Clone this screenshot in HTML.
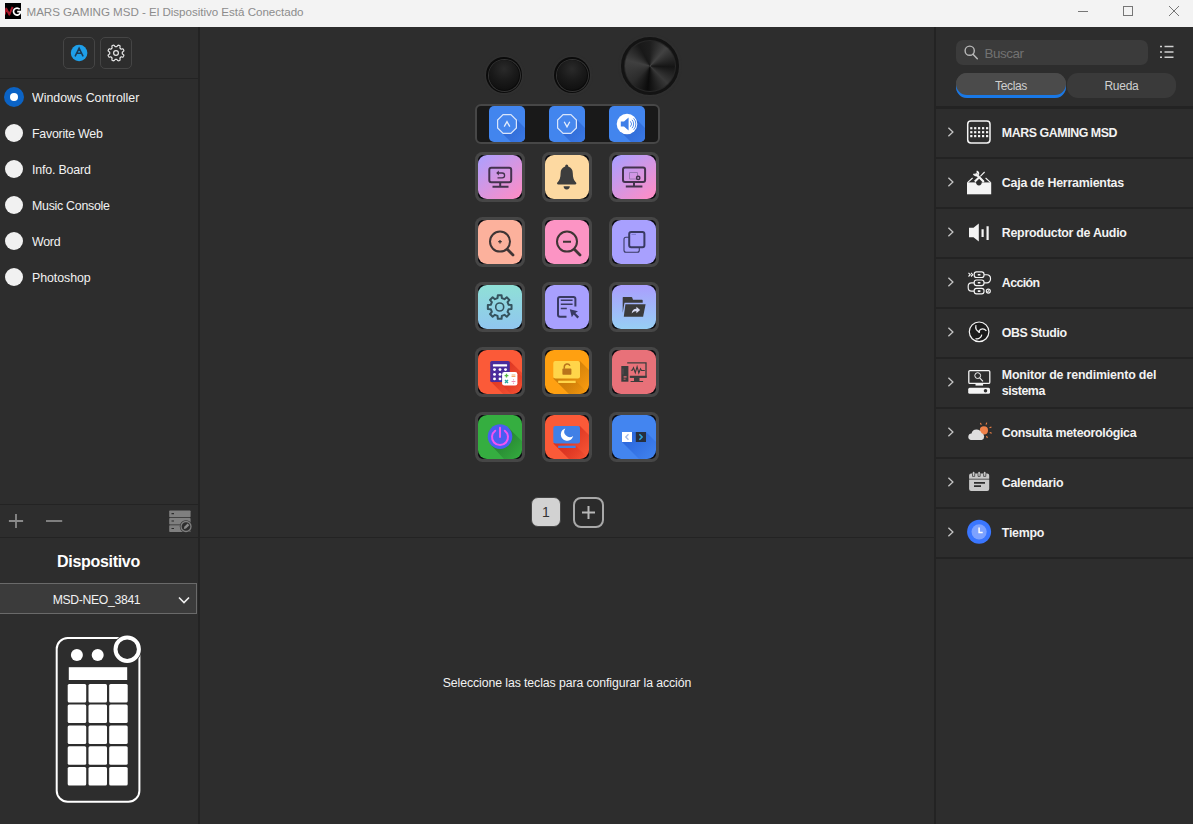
<!DOCTYPE html>
<html lang="es">
<head>
<meta charset="utf-8">
<title>MARS GAMING MSD</title>
<style>
*{box-sizing:border-box;margin:0;padding:0}
html,body{width:1193px;height:824px;overflow:hidden;background:#2d2d2d;font-family:"Liberation Sans",sans-serif;color:#f0f0f0}
.abs{position:absolute}
#title,.plabel,.txt,#disp,#msd,#sel,#buscar,#teclas,#rueda{opacity:.999}
#disp,#msd,#sel,#buscar,#teclas,#rueda{display:inline-block}
#app{position:relative;width:1193px;height:824px;background:#2d2d2d;overflow:hidden}
#titlebar{position:absolute;left:0;top:0;width:1193px;height:27px;background:#f3f3f3}
#title{position:absolute;left:26.500px;top:5px;font-size:11.600px;line-height:14px;color:#8c8c8c;white-space:nowrap}
.vline{position:absolute;background:#232323}
.hline{position:absolute;background:#232323}
.tbtn{position:absolute;width:32px;height:32px;border:1px solid #454545;border-radius:5px;top:37px}
.radio{position:absolute;left:4.700px;width:18.400px;height:18.400px;border-radius:50%;background:#f1f1f1;margin-top:-0.200px}
.radio.sel{background:#0b63c5;left:3.800px;width:20.400px;height:20.400px;margin-top:-1.100px}
.radio.sel::after{content:"";position:absolute;left:6px;top:6px;width:8.400px;height:8.400px;border-radius:50%;background:#fff}
.plabel{position:absolute;left:32px;font-size:12.400px;line-height:16px;color:#f2f2f2;white-space:nowrap}
.key{position:absolute;width:50px;height:50px;border-radius:7.500px;background:#464646;}
.key>.in{position:absolute;left:3px;top:3px;width:44px;height:44px;border-radius:5px;background:#0d0d12;overflow:hidden}
.lcd{position:absolute;top:106px;width:36px;height:36px;border-radius:5px;background:#4285ee;overflow:hidden}
.lcd svg{position:absolute;left:0;top:0;width:36px;height:36px}
.key svg{position:absolute;left:0;top:0;width:44px;height:44px}
.row{position:absolute;left:937px;width:256px;height:48px}
.row .chev{position:absolute;left:9.800px;top:17.700px}
.row .txt{position:absolute;left:64.800px;font-size:12.400px;font-weight:bold;color:#f2f2f2;white-space:nowrap;line-height:16px}
#title{letter-spacing:-0.029px}
#l1{letter-spacing:-0.007px}
#l2{letter-spacing:-0.231px}
#l3{letter-spacing:-0.184px}
#l4{letter-spacing:-0.282px}
#l5{letter-spacing:-0.248px}
#l6{letter-spacing:-0.072px}
#r1{letter-spacing:-0.436px}
#r2{letter-spacing:-0.232px}
#r3{letter-spacing:-0.276px}
#r4{letter-spacing:-0.619px}
#r5{letter-spacing:-0.404px}
#r6{letter-spacing:-0.178px}
#r6b{letter-spacing:-0.437px}
#r7{letter-spacing:-0.302px}
#r8{letter-spacing:-0.265px}
#r9{letter-spacing:-0.241px}
#sel{letter-spacing:-0.094px}
#disp{letter-spacing:-0.312px}
#msd{letter-spacing:-0.321px}
#buscar{letter-spacing:-0.465px}
#teclas{letter-spacing:-0.336px}
#rueda{letter-spacing:-0.255px}

</style>
</head>
<body>
<div id="app">
<!-- title bar -->
<div id="titlebar">
  <svg class="abs" style="left:5px;top:3px" width="16" height="16" viewBox="0 0 16 16"><rect width="16" height="16" fill="#000"/><path d="M-.3 11.500L1.300 5.600 4.300 11.600 7.600 3.800" stroke="#a8182a" stroke-width="2" fill="none" stroke-linejoin="round"/><path d="M14.700 6.300A3.500 3.500 0 1 0 15.300 9.800L15.300 8.700 12.200 8.700" stroke="#fff" stroke-width="1.700" fill="none"/></svg>
  <div id="title">MARS GAMING MSD - El Dispositivo Está Conectado</div>
  <svg class="abs" style="left:1077px;top:6px" width="12" height="12" viewBox="0 0 12 12"><path d="M1 5.5H11" stroke="#767676" stroke-width="1"/></svg>
  <svg class="abs" style="left:1122px;top:5px" width="12" height="12" viewBox="0 0 12 12"><rect x="1.5" y="1.5" width="9" height="9" stroke="#767676" stroke-width="1" fill="none"/></svg>
  <svg class="abs" style="left:1168px;top:5px" width="12" height="12" viewBox="0 0 12 12"><path d="M1 1L11 11M11 1L1 11" stroke="#767676" stroke-width="1"/></svg>
</div>

<!-- structural lines -->
<div class="vline" style="left:198px;top:27px;width:2px;height:797px"></div>
<div class="vline" style="left:934px;top:27px;width:2px;height:797px"></div>
<div class="hline" style="left:0;top:78px;width:198px;height:1px"></div>
<div class="hline" style="left:0;top:504px;width:198px;height:1px"></div>
<div class="hline" style="left:0;top:537px;width:935px;height:1px"></div>

<!-- LEFT PANEL -->
<div id="left">
  <div class="tbtn" style="left:63px"><svg class="abs" style="left:-1px;top:-1px" width="32" height="32" viewBox="0 0 32 32"><circle cx="16.100" cy="16" r="8.300" fill="#1e9fe9"/><path d="M12.300 18.900L16.100 11.300L19.900 18.900M13.500 16.300h5.200" fill="none" stroke="#1c3a55" stroke-width="1.500" stroke-linecap="round"/></svg></div>
  <div class="tbtn" style="left:100px"><svg class="abs" style="left:-1px;top:-1px" width="32" height="32" viewBox="0 0 32 32"><path d="M23.58 19.14L23.45 19.43L23.31 19.72L23.15 20.01L22.63 20.06L22.03 20.03L21.44 19.95L20.95 19.90L20.79 20.09L20.63 20.28L20.45 20.45L20.28 20.63L20.09 20.79L19.90 20.95L19.95 21.44L20.03 22.03L20.06 22.63L20.01 23.15L19.72 23.31L19.43 23.45L19.14 23.58L18.84 23.69L18.53 23.80L18.23 23.89L17.82 23.56L17.41 23.11L17.05 22.64L16.74 22.26L16.49 22.28L16.25 22.30L16.00 22.30L15.75 22.30L15.51 22.28L15.26 22.26L14.95 22.64L14.59 23.11L14.18 23.56L13.77 23.89L13.47 23.80L13.16 23.69L12.86 23.58L12.57 23.45L12.28 23.31L11.99 23.15L11.94 22.63L11.97 22.03L12.05 21.44L12.10 20.95L11.91 20.79L11.72 20.63L11.55 20.45L11.37 20.28L11.21 20.09L11.05 19.90L10.56 19.95L9.97 20.03L9.37 20.06L8.85 20.01L8.69 19.72L8.55 19.43L8.42 19.14L8.31 18.84L8.20 18.53L8.11 18.23L8.44 17.82L8.89 17.41L9.36 17.05L9.74 16.74L9.72 16.49L9.70 16.25L9.70 16.00L9.70 15.75L9.72 15.51L9.74 15.26L9.36 14.95L8.89 14.59L8.44 14.18L8.11 13.77L8.20 13.47L8.31 13.16L8.42 12.86L8.55 12.57L8.69 12.28L8.85 11.99L9.37 11.94L9.97 11.97L10.56 12.05L11.05 12.10L11.21 11.91L11.37 11.72L11.55 11.55L11.72 11.37L11.91 11.21L12.10 11.05L12.05 10.56L11.97 9.97L11.94 9.37L11.99 8.85L12.28 8.69L12.57 8.55L12.86 8.42L13.16 8.31L13.47 8.20L13.77 8.11L14.18 8.44L14.59 8.89L14.95 9.36L15.26 9.74L15.51 9.72L15.75 9.70L16.00 9.70L16.25 9.70L16.49 9.72L16.74 9.74L17.05 9.36L17.41 8.89L17.82 8.44L18.23 8.11L18.53 8.20L18.84 8.31L19.14 8.42L19.43 8.55L19.72 8.69L20.01 8.85L20.06 9.37L20.03 9.97L19.95 10.56L19.90 11.05L20.09 11.21L20.28 11.37L20.45 11.55L20.63 11.72L20.79 11.91L20.95 12.10L21.44 12.05L22.03 11.97L22.63 11.94L23.15 11.99L23.31 12.28L23.45 12.57L23.58 12.86L23.69 13.16L23.80 13.47L23.89 13.77L23.56 14.18L23.11 14.59L22.64 14.95L22.26 15.26L22.28 15.51L22.30 15.75L22.30 16.00L22.30 16.25L22.28 16.49L22.26 16.74L22.64 17.05L23.11 17.41L23.56 17.82L23.89 18.23L23.80 18.53L23.69 18.84Z" fill="none" stroke="#e6e6e6" stroke-width="1.200" stroke-linejoin="round"/><circle cx="16" cy="16" r="2.400" fill="none" stroke="#e6e6e6" stroke-width="1.200"/></svg></div>

  <div class="radio sel" style="top:88px"></div><div class="plabel" id="l1" style="top:90px">Windows Controller</div>
  <div class="radio" style="top:124px"></div><div class="plabel" id="l2" style="top:126px">Favorite Web</div>
  <div class="radio" style="top:160px"></div><div class="plabel" id="l3" style="top:162px">Info. Board</div>
  <div class="radio" style="top:196px"></div><div class="plabel" id="l4" style="top:198px">Music Console</div>
  <div class="radio" style="top:232px"></div><div class="plabel" id="l5" style="top:234px">Word</div>
  <div class="radio" style="top:268px"></div><div class="plabel" id="l6" style="top:270px">Photoshop</div>

  <svg class="abs" style="left:8px;top:513px" width="16" height="16" viewBox="0 0 16 16"><path d="M8 .9v14.200M.9 8h14.200" stroke="#8a8a8a" stroke-width="1.800"/></svg>
  <svg class="abs" style="left:45px;top:513px" width="18" height="16" viewBox="0 0 18 16"><path d="M1 8h16.200" stroke="#8a8a8a" stroke-width="1.800"/></svg>
  <svg class="abs" style="left:168px;top:509px" width="25" height="25" viewBox="0 0 25 25"><g fill="#7f7f7f"><rect x="1.200" y="1.500" width="21.400" height="6.700" rx=".8"/><rect x="1.200" y="8.900" width="21.400" height="6.700" rx=".8"/><rect x="1.200" y="16.300" width="21.400" height="6.700" rx=".8"/></g><g stroke="#2d2d2d" stroke-width="1.200"><path d="M3.500 4.700h2.500M3.500 12h2.500M3.500 19.500h2.500"/></g><circle cx="18" cy="17.500" r="6.200" fill="#2d2d2d"/><circle cx="18" cy="17.500" r="5" fill="none" stroke="#7f7f7f" stroke-width="1.300"/><path d="M15.800 20l.5-2.200 3.300-3.300 1.700 1.700-3.300 3.300z" fill="#8a8a8a"/></svg>

  <div class="abs" style="left:0;top:552.300px;width:197px;text-align:center;font-size:16px;font-weight:bold;line-height:20px;color:#fff"><span id="disp">Dispositivo</span></div>
  <div class="abs" style="left:0;top:583.400px;width:197px;height:31px;background:#3b3b3b;border:1px solid #6a6a6a;border-left:none"></div>
  <div class="abs" style="left:0;top:592px;width:193px;text-align:center;font-size:12.200px;line-height:16px;color:#f2f2f2"><span id="msd">MSD-NEO_3841</span></div>
  <svg class="abs" style="left:177px;top:593px" width="14" height="14" viewBox="0 0 14 14"><path d="M2 4.500l5 5 5-5" fill="none" stroke="#f0f0f0" stroke-width="1.600"/></svg>

  <svg class="abs" style="left:50px;top:630px" width="100" height="180" viewBox="0 0 100 180"><rect x="6.700" y="8" width="82.700" height="163.800" rx="11" fill="none" stroke="#fff" stroke-width="2"/><circle cx="77.200" cy="19.200" r="14.500" fill="#2d2d2d"/><circle cx="77.200" cy="19.200" r="11.700" fill="none" stroke="#fff" stroke-width="4"/><g fill="#fff"><circle cx="26.900" cy="25" r="6"/><circle cx="47.700" cy="25" r="6"/><rect x="18.800" y="37.200" width="58.400" height="12.800"/><rect x="17.7" y="53.9" width="18.500" height="18.500" rx="1.500"/><rect x="17.7" y="74.6" width="18.500" height="18.500" rx="1.500"/><rect x="17.7" y="95.4" width="18.500" height="18.500" rx="1.500"/><rect x="17.7" y="116.2" width="18.500" height="18.500" rx="1.500"/><rect x="17.7" y="137" width="18.500" height="18.500" rx="1.500"/><rect x="38.5" y="53.9" width="18.500" height="18.500" rx="1.500"/><rect x="38.5" y="74.6" width="18.500" height="18.500" rx="1.500"/><rect x="38.5" y="95.4" width="18.500" height="18.500" rx="1.500"/><rect x="38.5" y="116.2" width="18.500" height="18.500" rx="1.500"/><rect x="38.5" y="137" width="18.500" height="18.500" rx="1.500"/><rect x="59.2" y="53.9" width="18.500" height="18.500" rx="1.500"/><rect x="59.2" y="74.6" width="18.500" height="18.500" rx="1.500"/><rect x="59.2" y="95.4" width="18.500" height="18.500" rx="1.500"/><rect x="59.2" y="116.2" width="18.500" height="18.500" rx="1.500"/><rect x="59.2" y="137" width="18.500" height="18.500" rx="1.500"/></g></svg>
</div>
<!-- CENTER -->
<div id="center">
  <!-- knobs -->
  <div class="abs" style="left:486.4px;top:57.3px;width:36px;height:36px;border-radius:50%;background:#0b0b0b;box-shadow:0 0 2px 1px rgba(52,52,52,.8)"><div class="abs" style="left:1.300px;top:1.300px;width:33.400px;height:33.400px;border-radius:50%;background:#343434"></div><div class="abs" style="left:2.300px;top:2.300px;width:31.400px;height:31.400px;border-radius:50%;background:#0a0a0a"></div><div class="abs" style="left:3px;top:3px;width:30px;height:30px;border-radius:50%;background:radial-gradient(circle at 50% 30%,#2a2a2a 0%,#1a1a1a 45%,#0b0b0b 100%)"></div></div>
  <div class="abs" style="left:554.4px;top:57.3px;width:36px;height:36px;border-radius:50%;background:#0b0b0b;box-shadow:0 0 2px 1px rgba(52,52,52,.8)"><div class="abs" style="left:1.300px;top:1.300px;width:33.400px;height:33.400px;border-radius:50%;background:#343434"></div><div class="abs" style="left:2.300px;top:2.300px;width:31.400px;height:31.400px;border-radius:50%;background:#0a0a0a"></div><div class="abs" style="left:3px;top:3px;width:30px;height:30px;border-radius:50%;background:radial-gradient(circle at 50% 30%,#2a2a2a 0%,#1a1a1a 45%,#0b0b0b 100%)"></div></div>
  <div class="abs" style="left:621.200px;top:37.300px;width:57.600px;height:57.600px;border-radius:50%;background:#131313;box-shadow:0 0 2px 1px rgba(50,50,50,.7)"><div class="abs" style="left:3px;top:3px;width:51.600px;height:51.600px;border-radius:50%;background:#262626"></div><div class="abs" style="left:3.900px;top:3.900px;width:49.800px;height:49.800px;border-radius:50%;background:conic-gradient(from 0deg,#1e1e1e 0deg,#424242 42deg,#151515 92deg,#383838 135deg,#0b0b0b 186deg,#2c2c2c 228deg,#404040 284deg,#181818 332deg,#1e1e1e 360deg)"></div></div>

  <!-- LCD strip -->
  <div class="abs" style="left:475px;top:104px;width:185px;height:40px;border-radius:6px;background:#191919;border:2px solid #474747"></div>
  <div class="lcd" style="left:489px"><svg viewBox="0 0 36 36"><defs><linearGradient id="ls1" x1="0.3" y1="0.3" x2="1" y2="1"><stop offset="0" stop-color="#2f6ad6"/><stop offset="1" stop-color="#3d7de8"/></linearGradient></defs><path d="M10.9 25.100L25.100 10.900 40 26 40 40 26 40z" fill="url(#ls1)"/><path d="M14.1 8.600h7.800L27.400 14.100v7.800L21.900 27.400h-7.800L8.600 21.900v-7.800z" fill="#4687ee" stroke="#d9e5fb" stroke-width="1.250"/><path d="M15.200 20.600L18 15.600 20.800 20.600" fill="none" stroke="#e3ecfc" stroke-width="1.300"/></svg></div>
  <div class="lcd" style="left:549px"><svg viewBox="0 0 36 36"><defs><linearGradient id="ls2" x1="0.3" y1="0.3" x2="1" y2="1"><stop offset="0" stop-color="#2f6ad6"/><stop offset="1" stop-color="#3d7de8"/></linearGradient></defs><path d="M10.9 25.100L25.100 10.900 40 26 40 40 26 40z" fill="url(#ls2)"/><path d="M14.1 8.600h7.800L27.400 14.100v7.800L21.900 27.400h-7.800L8.600 21.900v-7.800z" fill="#4687ee" stroke="#d9e5fb" stroke-width="1.250"/><path d="M15.200 15.700L18 20.900 20.800 15.700" fill="none" stroke="#e3ecfc" stroke-width="1.300"/></svg></div>
  <div class="lcd" style="left:609px"><svg viewBox="0 0 36 36"><defs><linearGradient id="ls3" x1="0.3" y1="0.3" x2="1" y2="1"><stop offset="0" stop-color="#2f6ad6"/><stop offset="1" stop-color="#3d7de8"/></linearGradient></defs><path d="M10.900 25.100L25.100 10.900 40 26 40 40 26 40z" fill="url(#ls3)"/><circle cx="18" cy="18" r="10.300" fill="#fff"/><path d="M11.800 15.400h3.200l4.600-4v13.200l-4.600-4h-3.200z" fill="#3f7fe8"/><path d="M21.400 15.300a4 4 0 0 1 0 5.400M23 13.800a6.200 6.200 0 0 1 0 8.400M24.600 12.300a8.300 8.300 0 0 1 0 11.400" fill="none" stroke="#3f7fe8" stroke-width=".9"/></svg></div>

  <!-- keys grid -->
  <div class="key" style="left:475px;top:152px"><div class="in"><svg viewBox="0 0 44 44"><defs><linearGradient id="g1" x1="0.1" y1="0" x2="0.9" y2="1"><stop offset="0" stop-color="#ae9ffd"/><stop offset="1" stop-color="#fd8dc6"/></linearGradient></defs><rect width="44" height="44" rx="9" fill="url(#g1)"/><rect x="11.3" y="12.8" width="21.9" height="14.4" rx="2" fill="none" stroke="#43324d" stroke-width="2"/><path d="M22.2 27.5v4M14.5 31.7h16" stroke="#43324d" stroke-width="2" fill="none"/><path d="M19 18h5.2a2.4 2.4 0 0 1 0 4.8H19.5" stroke="#43324d" stroke-width="1.3" fill="none"/><path d="M20.8 15.6L18.2 18l2.6 2.4z" fill="#43324d"/></svg></div></div>
  <div class="key" style="left:542px;top:152px"><div class="in"><svg viewBox="0 0 44 44"><rect width="44" height="44" rx="9" fill="#fdd9a1"/><path d="M21.7 9.6a1.5 1.5 0 0 1 1.5 1.5v.5c3 .8 4.6 3.4 4.6 6.6 0 4.6 1 7.2 3.2 9.2.7.7.4 2.1-.9 2.1H13.3c-1.3 0-1.6-1.4-.9-2.1 2.2-2 3.2-4.6 3.2-9.2 0-3.200 1.600-5.800 4.600-6.600v-.5a1.500 1.500 0 0 1 1.500-1.500z" fill="#3d3d3d"/><path d="M18.600 31.300h6.200a3.100 3.100 0 0 1-6.200 0z" fill="#3d3d3d"/></svg></div></div>
  <div class="key" style="left:609px;top:152px"><div class="in"><svg viewBox="0 0 44 44"><defs><linearGradient id="g3" x1="0.1" y1="0" x2="0.9" y2="1"><stop offset="0" stop-color="#aa9fff"/><stop offset="1" stop-color="#ff8dc6"/></linearGradient></defs><rect width="44" height="44" rx="9" fill="url(#g3)"/><rect x="11" y="12.600" width="22.100" height="14.400" rx="2" fill="none" stroke="#43324d" stroke-width="2"/><path d="M22 27.300v4M13.800 31.500h16.600" stroke="#43324d" stroke-width="2" fill="none"/><path d="M17.500 17.500h8v6.500h-8z" stroke="#9a7ab4" stroke-width="1" fill="none"/><circle cx="26.200" cy="22.900" r="2.400" fill="#43324d"/><circle cx="26.200" cy="22.900" r="0.900" fill="#c99ad8"/></svg></div></div>
  <div class="key" style="left:475px;top:217px"><div class="in"><svg viewBox="0 0 44 44"><rect width="44" height="44" rx="9" fill="#fcb19c"/><circle cx="22" cy="21.600" r="10" fill="none" stroke="#3f3535" stroke-width="2"/><path d="M29.300 29.300L35 35" stroke="#3f3535" stroke-width="2.800" stroke-linecap="round"/><path d="M20.200 21.700h3.600M22 19.900v3.600" stroke="#3f3535" stroke-width="1.300"/></svg></div></div>
  <div class="key" style="left:542px;top:217px"><div class="in"><svg viewBox="0 0 44 44"><rect width="44" height="44" rx="9" fill="#fc94c4"/><circle cx="22" cy="21.600" r="10" fill="none" stroke="#3f3535" stroke-width="2"/><path d="M29.300 29.300L35 35" stroke="#3f3535" stroke-width="2.800" stroke-linecap="round"/><path d="M18 21.700h8" stroke="#3f3535" stroke-width="2"/></svg></div></div>
  <div class="key" style="left:609px;top:217px"><div class="in"><svg viewBox="0 0 44 44"><rect width="44" height="44" rx="9" fill="#a8a0fe"/><rect x="12" y="17.200" width="15.300" height="15" rx="2" fill="none" stroke="#393a62" stroke-width="1.100"/><rect x="17.200" y="12.100" width="15.200" height="15.200" rx="2" fill="#a8a0fe" stroke="#393a62" stroke-width="2"/><path d="M19.500 14.400h4.500" stroke="#7d78d0" stroke-width="1"/></svg></div></div>
  <div class="key" style="left:475px;top:282px"><div class="in"><svg viewBox="0 0 44 44"><defs><linearGradient id="g7" x1="0" y1="0" x2="0" y2="1"><stop offset="0" stop-color="#8fe0d6"/><stop offset="1" stop-color="#90c6f0"/></linearGradient></defs><rect width="44" height="44" rx="9" fill="url(#g7)"/><path d="M33.55 20.12L33.55 23.88L30.65 24.15L29.54 26.81L31.41 29.05L28.75 31.71L26.51 29.84L23.85 30.95L23.58 33.85L19.82 33.85L19.55 30.95L16.89 29.84L14.65 31.71L11.99 29.05L13.86 26.81L12.75 24.15L9.85 23.88L9.85 20.12L12.75 19.85L13.86 17.19L11.99 14.95L14.65 12.29L16.89 14.16L19.55 13.05L19.82 10.15L23.58 10.15L23.85 13.05L26.51 14.16L28.75 12.29L31.41 14.95L29.54 17.19L30.65 19.85Z" fill="none" stroke="#35535e" stroke-width="2" stroke-linejoin="round"/><circle cx="21.700" cy="22" r="4" fill="none" stroke="#35535e" stroke-width="1.600"/></svg></div></div>
  <div class="key" style="left:542px;top:282px"><div class="in"><svg viewBox="0 0 44 44"><rect width="44" height="44" rx="9" fill="#a8a0fe"/><path d="M30.400 21.500V14a2 2 0 0 0-2-2H15a2 2 0 0 0-2 2v15.700a2 2 0 0 0 2 2h6.500" fill="none" stroke="#393a62" stroke-width="2"/><path d="M15.800 15.300h11.800M15.800 19.300h11.800M15.800 23.500h6" stroke="#393a62" stroke-width="1.500"/><path d="M24.800 24.200l2 8 1.900-2.600 3.700 3.900 1.700-1.700-3.800-3.700 2.700-1.800z" fill="#393a62"/></svg></div></div>
  <div class="key" style="left:609px;top:282px"><div class="in"><svg viewBox="0 0 44 44"><defs><linearGradient id="g9" x1="0" y1="0" x2="0" y2="1"><stop offset="0" stop-color="#aa9efe"/><stop offset="1" stop-color="#97cff4"/></linearGradient></defs><rect width="44" height="44" rx="9" fill="url(#g9)"/><path d="M10.700 12.500a.6.600 0 0 1 .6-.6h8.200a.8.800 0 0 1 .7.500l.8 2.400h9a.7.700 0 0 1 .7.700v2.200H12.500l-1.800 10z" fill="#3b3b3b"/><path d="M13.400 19.200h20.200l-2.500 12.500H11.800z" fill="#3b3b3b"/><path d="M19.700 28.400c.2-3 2-4.600 4.700-4.700v-1.900l3.700 3.200-3.700 3.200v-2c-2 0-3.300.6-4.700 2.200z" fill="#d9dcf2"/></svg></div></div>
  <div class="key" style="left:475px;top:347px"><div class="in"><svg viewBox="0 0 44 44"><clipPath id="kc10"><rect width="44" height="44" rx="9"/></clipPath><linearGradient id="sg10" gradientUnits="userSpaceOnUse" x1="18" y1="18" x2="42" y2="42"><stop offset="0" stop-color="#d8301f" stop-opacity="1"/><stop offset="1" stop-color="#d8301f" stop-opacity="0.1"/></linearGradient><rect width="44" height="44" rx="9" fill="#fb5a38"/><g clip-path="url(#kc10)"><path d="M12.200 31L31.800 11 60 39 60 60 41 60z" fill="url(#sg10)"/><path d="M24.500 35.400L39.400 22 70 52 50 62z" fill="url(#sg10)"/></g><rect x="12.200" y="11" width="19.600" height="21" rx="1.600" fill="#4a2c9c"/><rect x="14.900" y="14.200" width="14.200" height="2.300" rx=".6" fill="#fff"/><circle cx="16.5" cy="19.6" r="1.450" fill="#fff"/><circle cx="16.5" cy="24.4" r="1.450" fill="#fff"/><circle cx="16.5" cy="28.9" r="1.450" fill="#fff"/><circle cx="22" cy="19.6" r="1.450" fill="#fff"/><circle cx="22" cy="24.4" r="1.450" fill="#fff"/><circle cx="22" cy="28.9" r="1.450" fill="#fff"/><circle cx="27.5" cy="19.6" r="1.450" fill="#fff"/><circle cx="27.5" cy="24.4" r="1.450" fill="#fff"/><circle cx="27.5" cy="28.9" r="1.450" fill="#fff"/><rect x="24.100" y="22" width="15.300" height="13.400" rx="2.200" fill="#fff"/><path d="M26.600 25.600h3.800M28.500 23.700v3.800" stroke="#58b947" stroke-width="1.400"/><path d="M33.600 25h3.800M33.600 26.500h3.800" stroke="#f5a25a" stroke-width=".9"/><path d="M27 30l3 3M30 30l-3 3" stroke="#2aa6a0" stroke-width="1.400"/><path d="M33.600 31.500h3.800" stroke="#f08fb0" stroke-width="1"/><circle cx="35.500" cy="29.800" r=".6" fill="#f08fb0"/><circle cx="35.500" cy="33.200" r=".6" fill="#f08fb0"/></svg></div></div>
  <div class="key" style="left:542px;top:347px"><div class="in"><svg viewBox="0 0 44 44"><clipPath id="kc11"><rect width="44" height="44" rx="9"/></clipPath><linearGradient id="sg11" gradientUnits="userSpaceOnUse" x1="18" y1="18" x2="42" y2="42"><stop offset="0" stop-color="#c97a08" stop-opacity="1"/><stop offset="1" stop-color="#c97a08" stop-opacity="0.1"/></linearGradient><rect width="44" height="44" rx="9" fill="#ffa011"/><g clip-path="url(#kc11)"><path d="M8.300 28.500L35 11 70 46 70 70 50 70z" fill="url(#sg11)"/><path d="M13.200 33L30.700 30.700 60 60 40 60z" fill="url(#sg11)"/></g><rect x="8.300" y="11" width="26.700" height="17.500" rx="2" fill="#ffd54a"/><rect x="13.200" y="30.700" width="17.500" height="2.300" fill="#ffd54a"/><rect x="17.400" y="18.600" width="9" height="6.200" rx=".8" fill="#b8731b"/><path d="M19.300 18.800v-2a2.900 2.900 0 0 1 5.600-1" fill="none" stroke="#b8731b" stroke-width="1.500"/></svg></div></div>
  <div class="key" style="left:609px;top:347px"><div class="in"><svg viewBox="0 0 44 44"><rect width="44" height="44" rx="9" fill="#e87179"/><rect x="9.300" y="16" width="7.100" height="15.700" fill="#3c3c3c"/><path d="M11 24.500v-6" stroke="#5a4a50" stroke-width="1"/><rect x="11.600" y="26.300" width="3" height="1.200" fill="#e87179"/><rect x="11.600" y="28.600" width="2" height="1.200" fill="#b05a60"/><path d="M15.200 12.800h18.800v14.300h-16" fill="none" stroke="#3c3c3c" stroke-width="1.300"/><path d="M17.800 26.800h16.800" stroke="#3c3c3c" stroke-width="2"/><rect x="22" y="27.500" width="5.500" height="3.500" fill="#3c3c3c"/><path d="M18.600 31.500h12.500" stroke="#3c3c3c" stroke-width="1.100"/><path d="M18.800 20.300h1.500l1.200-2.600 1.800 5 1.800-6 1.700 6.300 1.700-4.300 1 1.800h3.300" fill="none" stroke="#3c3c3c" stroke-width="1.100"/></svg></div></div>
  <div class="key" style="left:475px;top:412px"><div class="in"><svg viewBox="0 0 44 44"><clipPath id="kc13"><rect width="44" height="44" rx="9"/></clipPath><linearGradient id="sg13" gradientUnits="userSpaceOnUse" x1="18" y1="18" x2="42" y2="42"><stop offset="0" stop-color="#237a2d" stop-opacity="1"/><stop offset="1" stop-color="#237a2d" stop-opacity="0.1"/></linearGradient><rect width="44" height="44" rx="9" fill="#35ae40"/><g clip-path="url(#kc13)"><path d="M13.300 30.300L30.700 12.900 70 52 50 70z" fill="url(#sg13)"/></g><circle cx="22" cy="21.600" r="12.300" fill="#4a5df2"/><path d="M17.200 15.700a8 8 0 1 0 9.600 0" fill="none" stroke="#f255f0" stroke-width="2" stroke-linecap="round"/><path d="M22 12.800v9.200" stroke="#f255f0" stroke-width="2" stroke-linecap="round"/></svg></div></div>
  <div class="key" style="left:542px;top:412px"><div class="in"><svg viewBox="0 0 44 44"><clipPath id="kc14"><rect width="44" height="44" rx="9"/></clipPath><linearGradient id="sg14" gradientUnits="userSpaceOnUse" x1="18" y1="18" x2="42" y2="42"><stop offset="0" stop-color="#d8301f" stop-opacity="1"/><stop offset="1" stop-color="#d8301f" stop-opacity="0.1"/></linearGradient><rect width="44" height="44" rx="9" fill="#fb5a38"/><g clip-path="url(#kc14)"><path d="M8.300 28.500L35 11 70 46 70 70 50 70z" fill="url(#sg14)"/><path d="M13.200 33L30.700 30.700 60 60 40 60z" fill="url(#sg14)"/></g><rect x="8.300" y="11" width="26.700" height="17.500" rx="2" fill="#4080e6"/><rect x="13.200" y="30.700" width="17.500" height="2.300" fill="#4080e6"/><path d="M20.300 13.400a6.300 6.300 0 1 0 7.900 7.700a5.600 5.600 0 0 1-7.900-7.700z" fill="#fff"/></svg></div></div>
  <div class="key" style="left:609px;top:412px"><div class="in"><svg viewBox="0 0 44 44"><clipPath id="kc15"><rect width="44" height="44" rx="9"/></clipPath><linearGradient id="sg15" gradientUnits="userSpaceOnUse" x1="18" y1="18" x2="42" y2="42"><stop offset="0" stop-color="#2a66dc" stop-opacity="1"/><stop offset="1" stop-color="#2a66dc" stop-opacity="0.1"/></linearGradient><rect width="44" height="44" rx="9" fill="#4385f0"/><g clip-path="url(#kc15)"><path d="M10 27L20 17 34 17 70 53 70 70 53 70z" fill="url(#sg15)"/></g><rect x="10" y="17" width="10" height="10" fill="#fff"/><rect x="23.800" y="17" width="10.200" height="10" fill="#27303f"/><path d="M16.500 19.300l-2.700 2.700 2.700 2.700" fill="none" stroke="#a4bbe8" stroke-width="1.400"/><path d="M27.400 19.300l2.700 2.700-2.700 2.700" fill="none" stroke="#2fa2d6" stroke-width="1.600"/></svg></div></div>
  <!-- pager -->
  <div class="abs" style="left:531px;top:497px;width:30px;height:30px;border-radius:7px;background:#d2d2d2;border:1px solid #444;color:#333;font-size:14px;line-height:29px;text-align:center">1</div>
  <div class="abs" style="left:573px;top:497px;width:31px;height:31px;border-radius:8px;border:2px solid #a8a8a8;background:#2b2b2b"><svg class="abs" style="left:0;top:0" width="27" height="27" viewBox="0 0 27 27"><path d="M13.5 7v13M7 13.5h13" stroke="#b8b8b8" stroke-width="2"/></svg></div>

  <div class="abs" style="left:200px;top:675px;width:734px;text-align:center;font-size:12.300px;line-height:16px;color:#f2f2f2"><span id="sel">Seleccione las teclas para configurar la acción</span></div>
</div>
<!-- RIGHT PANEL -->
<div id="right">
  <div class="abs" style="left:956px;top:40px;width:192px;height:25px;border-radius:7px;background:#3b3b3b"></div>
  <svg class="abs" style="left:962px;top:43px" width="20" height="20" viewBox="0 0 20 20"><circle cx="7.700" cy="7.700" r="4.600" fill="none" stroke="#b9b9b9" stroke-width="1.400"/><path d="M11 11.200l4.300 4.500" stroke="#b9b9b9" stroke-width="1.500" stroke-linecap="round"/></svg>
  <div class="abs" style="left:984.600px;top:44.500px;font-size:13.400px;line-height:18px;color:#727272;white-space:nowrap"><span id="buscar">Buscar</span></div>
  <svg class="abs" style="left:1158px;top:43px" width="18" height="18" viewBox="0 0 18 18"><path d="M2 3.600h2M2 8.900h2M2 14.200h2" stroke="#d0d0d0" stroke-width="1.500"/><path d="M6.500 3.600h9M6.500 8.900h9M6.500 14.200h9" stroke="#d0d0d0" stroke-width="1.500"/></svg>
  <div class="abs" style="left:956px;top:73px;width:110px;height:25px;border-radius:11px;background:#4b4b4b;overflow:hidden"><div class="abs" style="left:0;top:11px;width:110px;height:14px;background:#1978e6"></div><div class="abs" style="left:0;top:0;width:110px;height:22px;border-radius:0 0 11px 11px;background:#4b4b4b"></div></div>
  <div class="abs tab" style="left:956px;top:78px;width:110px;text-align:center;font-size:12px;line-height:16px;color:#cfcfcf"><span id="teclas">Teclas</span></div>
  <div class="abs" style="left:1067px;top:73px;width:109px;height:25px;border-radius:11px;background:#3a3a3a"></div>
  <div class="abs tab" style="left:1067px;top:78px;width:109px;text-align:center;font-size:12px;line-height:16px;color:#cfcfcf"><span id="rueda">Rueda</span></div>
  <div class="hline" style="left:936px;top:106px;width:257px;height:3px"></div>
  <div class="row" style="top:108px"><svg class="chev" width="8" height="12" viewBox="0 0 8 12"><path d="M1.400 1.700L5.900 6 1.400 10.300" fill="none" stroke="#c4c4c4" stroke-width="1.300"/></svg><svg class="abs" style="left:28px;top:10px" width="28" height="28" viewBox="0 0 28 28"><rect x="2.700" y="3" width="22.300" height="22" rx="3.200" fill="none" stroke="#f4f4f4" stroke-width="1.500"/><rect x="5.2" y="9.1" width="2.200" height="2.200" fill="#f4f4f4"/><rect x="5.2" y="13.1" width="2.200" height="2.200" fill="#f4f4f4"/><rect x="5.2" y="17.0" width="2.200" height="2.200" fill="#f4f4f4"/><rect x="9.1" y="9.1" width="2.200" height="2.200" fill="#f4f4f4"/><rect x="9.1" y="13.1" width="2.200" height="2.200" fill="#f4f4f4"/><rect x="9.1" y="17.0" width="2.200" height="2.200" fill="#f4f4f4"/><rect x="13.0" y="9.1" width="2.200" height="2.200" fill="#f4f4f4"/><rect x="13.0" y="13.1" width="2.200" height="2.200" fill="#f4f4f4"/><rect x="13.0" y="17.0" width="2.200" height="2.200" fill="#f4f4f4"/><rect x="17.0" y="9.1" width="2.200" height="2.200" fill="#f4f4f4"/><rect x="17.0" y="13.1" width="2.200" height="2.200" fill="#f4f4f4"/><rect x="17.0" y="17.0" width="2.200" height="2.200" fill="#f4f4f4"/><rect x="21.0" y="9.1" width="2.200" height="2.200" fill="#f4f4f4"/><rect x="21.0" y="13.1" width="2.200" height="2.200" fill="#f4f4f4"/><rect x="21.0" y="17.0" width="2.200" height="2.200" fill="#f4f4f4"/></svg><div class="txt" id="r1" style="top:16.500px">MARS GAMING MSD</div></div>
  <div class="hline" style="left:936px;top:157px;width:257px;height:2px"></div>
  <div class="row" style="top:158px"><svg class="chev" width="8" height="12" viewBox="0 0 8 12"><path d="M1.400 1.700L5.900 6 1.400 10.300" fill="none" stroke="#c4c4c4" stroke-width="1.300"/></svg><svg class="abs" style="left:28px;top:10px" width="28" height="28" viewBox="0 0 28 28"><path d="M2 14.400H26.200V26.300H2z" fill="#f4f4f4"/><path d="M2.500 14.600L7.600 10M25.700 14.600L20.600 10" stroke="#f4f4f4" stroke-width="1.100"/><circle cx="13.900" cy="14.600" r="2.800" fill="#2d2d2d"/><path d="M11.200 6.200L18.200 13.200" stroke="#f4f4f4" stroke-width="2.300" stroke-linecap="round"/><path d="M8.700 5.700a2.700 2.700 0 0 0 3.600 1.600M11.600 3.400a2.700 2.700 0 0 1 1.600 3.400" fill="none" stroke="#f4f4f4" stroke-width="1.700"/><path d="M19.600 4L15.300 8.300" stroke="#f4f4f4" stroke-width="1.100"/><path d="M14.300 9.300L9.800 13.600" stroke="#f4f4f4" stroke-width="2.100"/></svg><div class="txt" id="r2" style="top:16.500px">Caja de Herramientas</div></div>
  <div class="hline" style="left:936px;top:207px;width:257px;height:2px"></div>
  <div class="row" style="top:208px"><svg class="chev" width="8" height="12" viewBox="0 0 8 12"><path d="M1.400 1.700L5.900 6 1.400 10.300" fill="none" stroke="#c4c4c4" stroke-width="1.300"/></svg><svg class="abs" style="left:28px;top:10px" width="28" height="28" viewBox="0 0 28 28"><path d="M4 9.800h4.500L13.800 5.500V23.500L8.500 19.200H4z" fill="#f4f4f4"/><path d="M17.600 11.200v7.800M22.600 8.200v13.800" stroke="#f4f4f4" stroke-width="2.200"/></svg><div class="txt" id="r3" style="top:16.500px">Reproductor de Audio</div></div>
  <div class="hline" style="left:936px;top:257px;width:257px;height:2px"></div>
  <div class="row" style="top:258px"><svg class="chev" width="8" height="12" viewBox="0 0 8 12"><path d="M1.400 1.700L5.900 6 1.400 10.300" fill="none" stroke="#c4c4c4" stroke-width="1.300"/></svg><svg class="abs" style="left:28px;top:10px" width="28" height="28" viewBox="0 0 28 28"><g fill="none" stroke="#f4f4f4" stroke-width="1.150"><rect x="9.200" y="3.900" width="9.800" height="5.600" rx="2.300"/><rect x="9.200" y="12" width="9.800" height="5.600" rx="2.300"/><rect x="9.200" y="20.300" width="9.800" height="5.600" rx="2.300"/><path d="M19 6.700h3a3.500 3.500 0 0 1 3.500 3.500v1.100a3.500 3.500 0 0 1-3.500 3.500h-3"/><path d="M9.200 14.800h-2.700a3.300 3.300 0 0 0-3.300 3.300v1.700a3.300 3.300 0 0 0 3.300 3.300h2.700"/><circle cx="23.300" cy="23.100" r="2"/><path d="M22.500 23.900l1.600-1.600"/><path d="M3.500 4.900l1.700 1.800-1.700 1.800M6 4.900l1.700 1.800L6 8.500"/><path d="M12.800 6.700h2.600M12.800 14.800h2.600M12.800 23.100h2.600" stroke-width="1.600"/></g></svg><div class="txt" id="r4" style="top:16.500px">Acción</div></div>
  <div class="hline" style="left:936px;top:307px;width:257px;height:2px"></div>
  <div class="row" style="top:308px"><svg class="chev" width="8" height="12" viewBox="0 0 8 12"><path d="M1.400 1.700L5.900 6 1.400 10.300" fill="none" stroke="#c4c4c4" stroke-width="1.300"/></svg><svg class="abs" style="left:28px;top:10px" width="28" height="28" viewBox="0 0 28 28"><circle cx="14.100" cy="13.800" r="9.800" fill="#1b1b1b" stroke="#f4f4f4" stroke-width="1.200"/><g fill="none" stroke="#f4f4f4" stroke-width="1.200"><path d="M11 7.200c-.9 3.200.5 6 3.600 6.700"/><path d="M21.400 12.800c-2.300-2.400-5.400-2.500-7.400 0"/><path d="M10.500 20.600c3.200.8 5.800-.9 6.300-4"/></g><circle cx="14.100" cy="14" r="1" fill="#f4f4f4"/></svg><div class="txt" id="r5" style="top:16.500px">OBS Studio</div></div>
  <div class="hline" style="left:936px;top:357px;width:257px;height:2px"></div>
  <div class="row" style="top:358px"><svg class="chev" width="8" height="12" viewBox="0 0 8 12"><path d="M1.400 1.700L5.900 6 1.400 10.300" fill="none" stroke="#c4c4c4" stroke-width="1.300"/></svg><svg class="abs" style="left:28px;top:10px" width="28" height="28" viewBox="0 0 28 28"><rect x="3.800" y="2.600" width="21" height="12.800" rx="1.200" fill="none" stroke="#f4f4f4" stroke-width="1.300"/><circle cx="12.700" cy="7.600" r="2.900" fill="none" stroke="#f4f4f4" stroke-width="1"/><path d="M14.700 9.800l3.300 3.600" stroke="#f4f4f4" stroke-width="1.100"/><path d="M10.500 16.800h7.600" stroke="#f4f4f4" stroke-width="1.600"/><rect x="3.200" y="19.700" width="21.800" height="6.100" rx="1.500" fill="#f4f4f4"/><circle cx="20.500" cy="22.700" r="1.750" fill="#2d2d2d"/></svg><div class="txt" id="r6" style="top:8.500px">Monitor de rendimiento del</div><div class="txt" id="r6b" style="top:24.500px">sistema</div></div>
  <div class="hline" style="left:936px;top:407px;width:257px;height:2px"></div>
  <div class="row" style="top:408px"><svg class="chev" width="8" height="12" viewBox="0 0 8 12"><path d="M1.400 1.700L5.900 6 1.400 10.300" fill="none" stroke="#c4c4c4" stroke-width="1.300"/></svg><svg class="abs" style="left:28px;top:10px" width="28" height="28" viewBox="0 0 28 28"><g transform="translate(0,6)"><g stroke="#ef8145" stroke-width="1.100"><path d="M16.29 0.78L15.40 -1.13"/><path d="M21.03 0.58L21.75 -1.40"/><path d="M24.52 3.79L26.43 2.90"/><path d="M24.72 8.53L26.70 9.25"/><path d="M21.51 12.02L22.40 13.93"/><path d="M16.77 12.22L16.05 14.20"/></g><circle cx="18.900" cy="6.400" r="4.100" fill="#f0824a"/><path d="M5.800 16.200a3.300 3.300 0 0 1 .7-6.500 5.200 5.200 0 0 1 10-.4 3.600 3.600 0 0 1 .2 6.900z" fill="#dedede" transform="translate(0,-0.200)"/></g></svg><div class="txt" id="r7" style="top:16.500px">Consulta meteorológica</div></div>
  <div class="hline" style="left:936px;top:457px;width:257px;height:2px"></div>
  <div class="row" style="top:458px"><svg class="chev" width="8" height="12" viewBox="0 0 8 12"><path d="M1.400 1.700L5.900 6 1.400 10.300" fill="none" stroke="#c4c4c4" stroke-width="1.300"/></svg><svg class="abs" style="left:28px;top:10px" width="28" height="28" viewBox="0 0 28 28"><path d="M4.100 7.600a2 2 0 0 1 2-2h16.100a2 2 0 0 1 2 2v3.200H4.100z" fill="#c9c9c9"/><path d="M4.100 11.600h20.100v9.400a2 2 0 0 1-2 2H6.100a2 2 0 0 1-2-2z" fill="#c9c9c9"/><g stroke="#c9c9c9" stroke-width="1.700" stroke-linecap="round"><path d="M8.600 4.500v3M14.100 4.500v3M19.700 4.500v3"/></g><g stroke="#2d2d2d" stroke-width=".7" fill="none"><path d="M7.500 5.600v2.800h2.200V5.600M13 5.600v2.800h2.200V5.600M18.600 5.600v2.800h2.200V5.600"/></g><path d="M9 14.800h11M9 18.200h7" stroke="#2d2d2d" stroke-width="1.700"/></svg><div class="txt" id="r8" style="top:16.500px">Calendario</div></div>
  <div class="hline" style="left:936px;top:507px;width:257px;height:2px"></div>
  <div class="row" style="top:508px"><svg class="chev" width="8" height="12" viewBox="0 0 8 12"><path d="M1.400 1.700L5.900 6 1.400 10.300" fill="none" stroke="#c4c4c4" stroke-width="1.300"/></svg><svg class="abs" style="left:28px;top:10px" width="28" height="28" viewBox="0 0 28 28"><circle cx="14.100" cy="13.800" r="12" fill="#3a76ff"/><circle cx="14.100" cy="13.800" r="7.600" fill="#7da2ff"/><path d="M14.100 9.600v5h3.600" fill="none" stroke="#fff" stroke-width="1.500"/></svg><div class="txt" id="r9" style="top:16.500px">Tiempo</div></div>
  <div class="hline" style="left:936px;top:557px;width:257px;height:2px"></div>
</div>
</div>
</body>
</html>
